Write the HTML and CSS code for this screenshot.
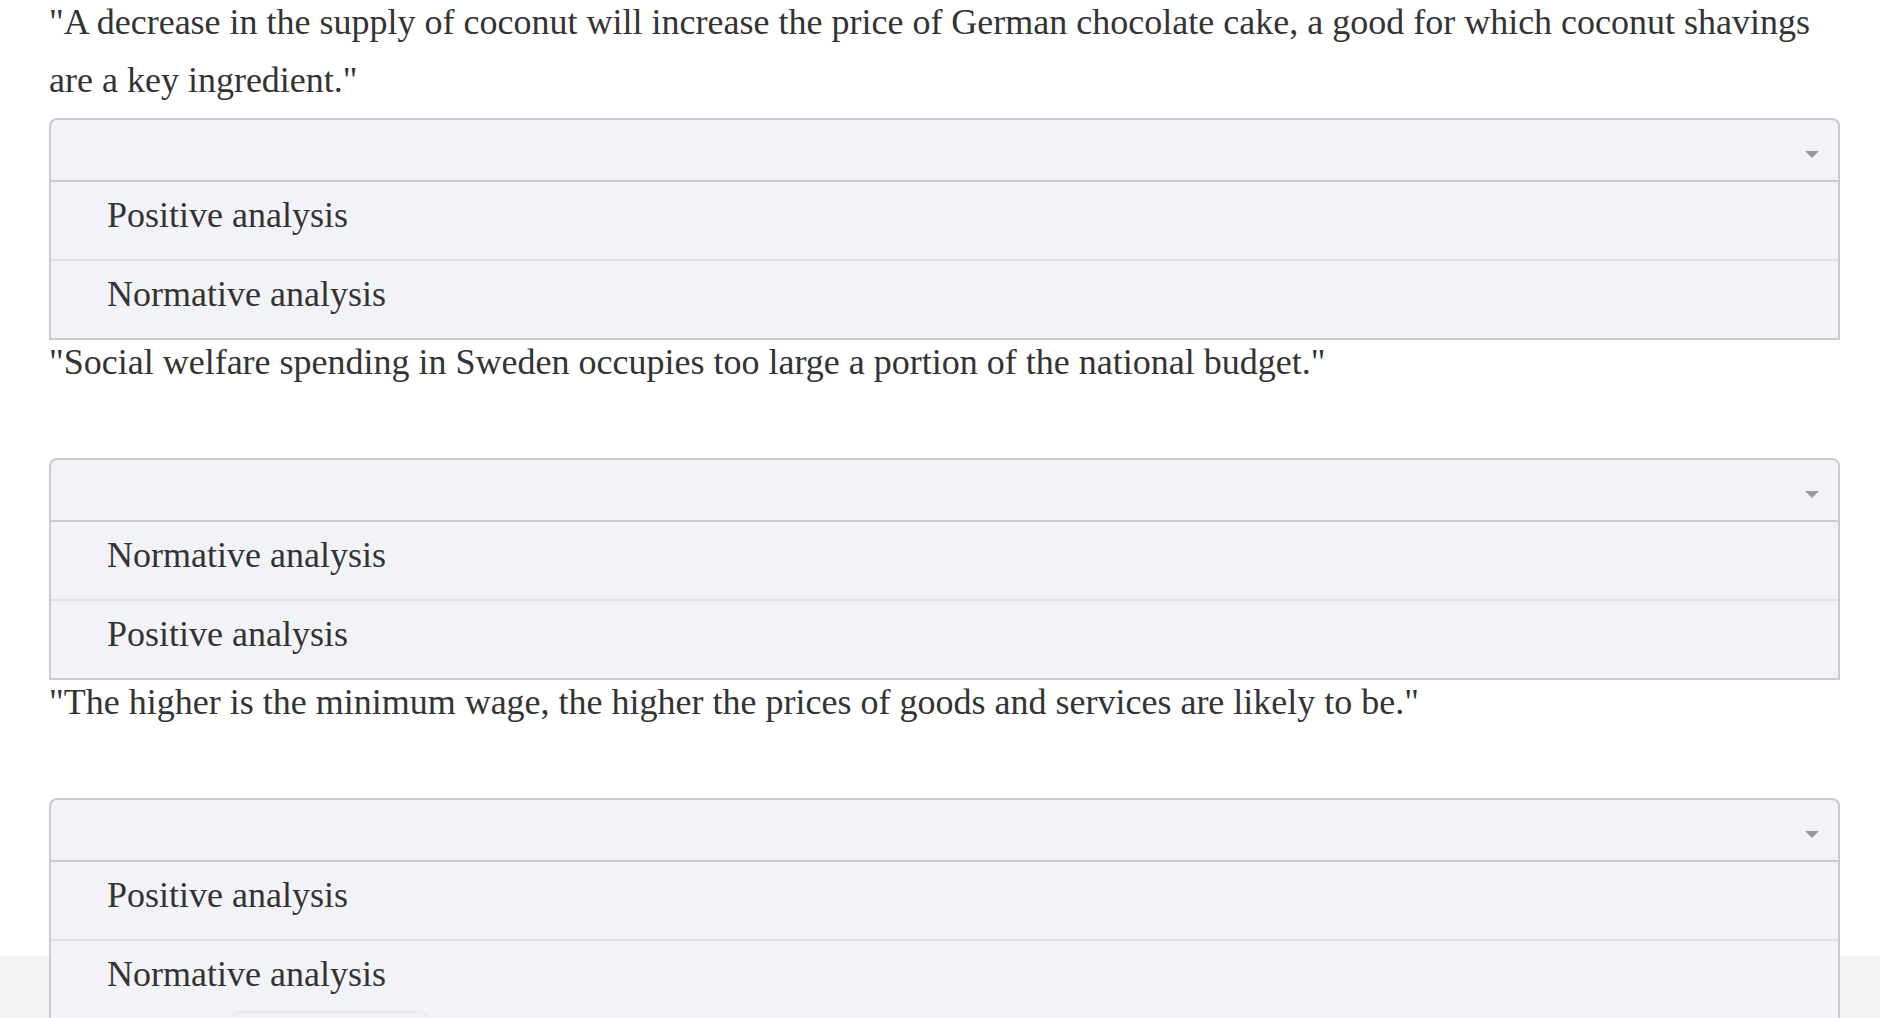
FILE: index.html
```html
<!DOCTYPE html>
<html lang="en">
<head>
  <meta charset="UTF-8">
  <title>Positive vs Normative</title>
  <meta name="viewport" content="width=device-width, initial-scale=1.0">
  <link rel="stylesheet" href="styles.css">
</head>
<body>

  <div class="quiz">

    <!-- Question 1 -->
    <div class="question">"A decrease in the supply of coconut will increase the price of German chocolate cake, a good for which coconut shavings are a key ingredient."</div>
    <div class="dropdown">
      <div class="dropdown-head"><span class="caret"></span></div>
      <ul class="dropdown-list">
        <li>Positive analysis</li>
        <li>Normative analysis</li>
      </ul>
    </div>

    <!-- Question 2 -->
    <div class="question">"Social welfare spending in Sweden occupies too large a portion of the national budget."</div>
    <div class="dropdown">
      <div class="dropdown-head"><span class="caret"></span></div>
      <ul class="dropdown-list">
        <li>Normative analysis</li>
        <li>Positive analysis</li>
      </ul>
    </div>

    <!-- Question 3 -->
    <div class="question">"The higher is the minimum wage, the higher the prices of goods and services are likely to be."</div>
    <div class="dropdown">
      <div class="dropdown-head"><span class="caret"></span></div>
      <ul class="dropdown-list">
        <li>Positive analysis</li>
        <li>Normative analysis</li>
      </ul>
    </div>

  </div>

  <footer class="footer-bar"></footer>
  <div class="footer-btn"></div>

</body>
</html>
```

FILE: styles.css
```css
body {
  margin: 0;
  background: #fff;
  color: #333;
  font-family: 'Liberation Serif', 'Times New Roman', serif;
  font-size: 36px;
}

.quiz {
  padding: 1px 40px 0 49px;
}

.question {
  margin-top: -7px;
  min-height: 116px;
  line-height: 58px;
}

.question:first-child {
  margin-top: -8px;
}

.dropdown {
  position: relative;
  z-index: 2;
  margin-top: 9px;
  background: #f2f3f7;
  border: 2px solid #cbcbcb;
  border-radius: 8px 8px 0 0;
}

.dropdown-head {
  height: 62px;
  display: flex;
  justify-content: flex-end;
  align-items: center;
  padding: 9px 19px 0 0;
  box-sizing: border-box;
  border-bottom: 2px solid #cbcbcb;
}

.caret {
  width: 0;
  height: 0;
  border-left: 7px solid transparent;
  border-right: 7px solid transparent;
  border-top: 7px solid #9a9a9a;
}

.dropdown-list {
  list-style: none;
  margin: 0;
  padding: 0;
}

.dropdown-list li {
  height: 77px;
  box-sizing: border-box;
  display: flex;
  align-items: center;
  padding: 0 0 12px 56px;
  line-height: 1;
}

.dropdown-list li + li {
  height: 79px;
  border-top: 2px solid #e1e2e7;
}

/* bottom bar */
.footer-bar {
  position: fixed;
  left: 0;
  right: 0;
  bottom: 0;
  height: 62px;
  background: #f2f2f2;
  z-index: 1;
}

.footer-btn {
  position: fixed;
  left: 233px;
  top: 1013px;
  width: 194px;
  height: 40px;
  border-radius: 8px;
  background: #f2f3f7;
  box-shadow: 0 -1px 4px rgba(0, 0, 0, 0.08);
  z-index: 3;
}
```
